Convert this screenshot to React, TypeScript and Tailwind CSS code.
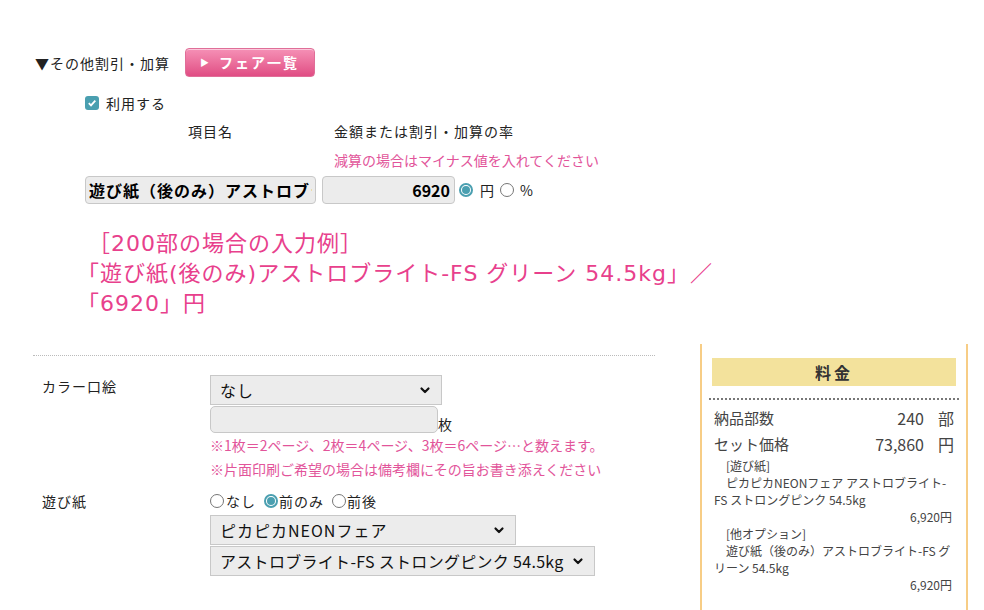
import React from "react";

const Chevron = () => (
  <svg width="12" height="12" viewBox="0 0 12 12" className="absolute right-[10px] top-1/2 -translate-y-1/2 pointer-events-none">
    <path d="M2.5 4.5 L6 8 L9.5 4.5" fill="none" stroke="#111" strokeWidth="2.2" strokeLinecap="round" strokeLinejoin="round" />
  </svg>
);

const Radio = ({ checked }: { checked?: boolean }) =>
  checked ? (
    <span className="inline-flex w-[14px] h-[14px] rounded-full border-[2px] border-[#4a9fb0] items-center justify-center bg-white">
      <span className="w-[8px] h-[8px] rounded-full bg-[#4a9fb0]" />
    </span>
  ) : (
    <span className="inline-block w-[14px] h-[14px] rounded-full border border-[#767676] bg-white" />
  );

const Select = ({ text, w }: { text: string; w: string }) => (
  <div className={`relative h-[30px] border border-[#c8c8c8] bg-[#ececec] flex items-center pl-[9px] text-[16px] text-[#111] ${w}`}>
    <span className="whitespace-nowrap">{text}</span>
    <Chevron />
  </div>
);

const Halt = ({ children }: { children: React.ReactNode }) => (
  <span style={{ fontFeatureSettings: '"halt"' }}>{children}</span>
);

export default function App() {
  return (
    <div
      className="relative w-[984px] h-[610px] overflow-hidden bg-white text-[#222] tracking-[1px]"
      style={{ fontFamily: '"Noto Sans CJK JP", "Noto Sans", sans-serif' }}
    >
      {/* header */}
      <div className="flex items-center pl-[35px] pt-[48px]">
        <span className="text-[14px] leading-[20px]">▼その他割引・加算</span>
        <button className="ml-[15px] w-[130px] h-[29px] rounded-[4px] border border-[#e06e98] bg-gradient-to-b from-[#f590b6] to-[#e04c84] text-white font-bold text-[14px] flex items-center pl-[14px] shadow-[inset_0_1px_0_rgba(255,255,255,0.5)]">
          <span className="text-[9px] mr-[9px]">▶</span>
          <span className="tracking-[2px]">フェア一覧</span>
        </button>
      </div>

      {/* checkbox */}
      <div className="flex items-center pl-[85px] mt-[16px] h-[20px]">
        <span className="w-[14px] h-[14px] rounded-[3px] bg-[#4a9fb0] flex items-center justify-center">
          <svg width="10" height="10" viewBox="0 0 10 10">
            <path d="M1.8 5.2 L4 7.4 L8.3 2.6" fill="none" stroke="white" strokeWidth="1.8" />
          </svg>
        </span>
        <span className="ml-[7px] text-[14px]">利用する</span>
      </div>

      {/* column headers */}
      <div className="flex mt-[8px] h-[20px] items-center text-[14px]">
        <span className="ml-[188px] w-[146px]">項目名</span>
        <span>金額または割引・加算の率</span>
      </div>
      <div className="ml-[334px] mt-[9px] h-[20px] flex items-center text-[14px] tracking-[0px] text-[#e2549a]">
        減算の場合はマイナス値を入れてください
      </div>

      {/* inputs */}
      <div className="flex items-center ml-[85px] mt-[6px]">
        <input
          readOnly
          value="遊び紙（後のみ）アストロブライト-FS グリーン 54.5kg"
          className="w-[231px] h-[28px] rounded-[4px] border border-[#c8c8c8] bg-[#ececec] px-[3px] font-bold text-[16px] tracking-[1px] text-black outline-none"
        />
        <input
          readOnly
          value="6920"
          className="ml-[6px] w-[133px] h-[28px] rounded-[4px] border border-[#c8c8c8] bg-[#ececec] px-[4px] font-bold text-[16px] tracking-[0px] text-black text-right outline-none"
        />
        <span className="ml-[4px] flex items-center"><Radio checked /></span>
        <span className="ml-[7px] text-[14px]">円</span>
        <span className="ml-[5px] flex items-center"><Radio /></span>
        <span className="ml-[6px] text-[14px]">%</span>
      </div>

      {/* example text */}
      <div
        className="ml-[88px] mt-[25px] text-[22px] leading-[30px] text-[#e8408c] tracking-[1px]"
        style={{ fontFamily: '"DejaVu Sans", "Noto Sans CJK JP", sans-serif' }}
      >
        <div>［200部の場合の入力例］</div>
        <div><Halt>「</Halt>遊び紙(後のみ)アストロブライト-FS グリーン 54.5kg」／</div>
        <div><Halt>「</Halt>6920」円</div>
      </div>

      {/* bottom */}
      <div className="flex mt-[25px]">
        <div className="ml-[33px] w-[622px]">
          <div className="mt-[11px] border-t border-dotted border-[#bbb]" />
          <div className="flex mt-[19px]">
            <div className="w-[177px] pl-[9px] text-[14px] pt-[1px]">カラー口絵</div>
            <div className="flex flex-col">
              <Select text="なし" w="w-[232px]" />
              <div className="flex items-end mt-[1px]">
                <div className="w-[228px] h-[27px] rounded-[5px] border border-[#c8c8c8] bg-[#ececec]" />
                <span className="text-[14px] leading-[18px]">枚</span>
              </div>
              <div className="text-[14px] tracking-[0px] leading-[24px] text-[#e2549a]">※1枚＝2ページ、2枚＝4ページ、3枚＝6ページ…と数えます。</div>
              <div className="text-[14px] tracking-[0px] leading-[25px] text-[#e2549a]">※片面印刷ご希望の場合は備考欄にその旨お書き添えください</div>
            </div>
          </div>
          <div className="flex mt-[9px]">
            <div className="w-[177px] pl-[9px] text-[14px]">遊び紙</div>
            <div className="flex flex-col">
              <div className="flex items-center text-[14px] h-[20px]">
                <Radio />
                <span className="ml-[2px]">なし</span>
                <span className="ml-[8px] flex"><Radio checked /></span>
                <span className="ml-[1px]">前のみ</span>
                <span className="ml-[8px] flex"><Radio /></span>
                <span className="ml-[1px]">前後</span>
              </div>
              <div className="mt-[4px]"><Select text="ピカピカNEONフェア" w="w-[306px]" /></div>
              <div className="mt-[1px]"><Select text="アストロブライト-FS ストロングピンク 54.5kg" w="w-[385px] pr-[24px] tracking-[0.3px]" /></div>
            </div>
          </div>
        </div>

        <div className="ml-[45px] w-[268px] h-[280px] border-x-[2px] border-[#f7cd86] px-[7px] text-[#444] tracking-[0px]">
          <div className="mt-[14px] mx-[3px] h-[28px] bg-[#f3e29c] flex items-center justify-center font-bold text-[16px] text-[#333] tracking-[3px]">
            料金
          </div>
          <div className="mt-[12px] border-t-[2px] border-dotted border-[#777]" />
          <div className="px-[5px]">
            <div className="flex justify-between items-end mt-[7px] text-[15px] leading-[22px]">
              <span>納品部数</span>
              <span className="text-[16px]">240<span className="ml-[14px]">部</span></span>
            </div>
            <div className="flex justify-between items-end mt-[4px] text-[15px] leading-[22px]">
              <span>セット価格</span>
              <span className="text-[16px]">73,860<span className="ml-[14px]">円</span></span>
            </div>
            <div className="text-[12px] leading-[17px] mt-[2px] pr-[2px]">
              <div>　[遊び紙]</div>
              <div>　ピカピカNEONフェア アストロブライト-FS ストロングピンク 54.5kg</div>
              <div className="text-right">6,920円</div>
              <div>　[他オプション]</div>
              <div>　遊び紙（後のみ）アストロブライト-FS グリーン 54.5kg</div>
              <div className="text-right">6,920円</div>
            </div>
          </div>
        </div>
      </div>
    </div>
  );
}
